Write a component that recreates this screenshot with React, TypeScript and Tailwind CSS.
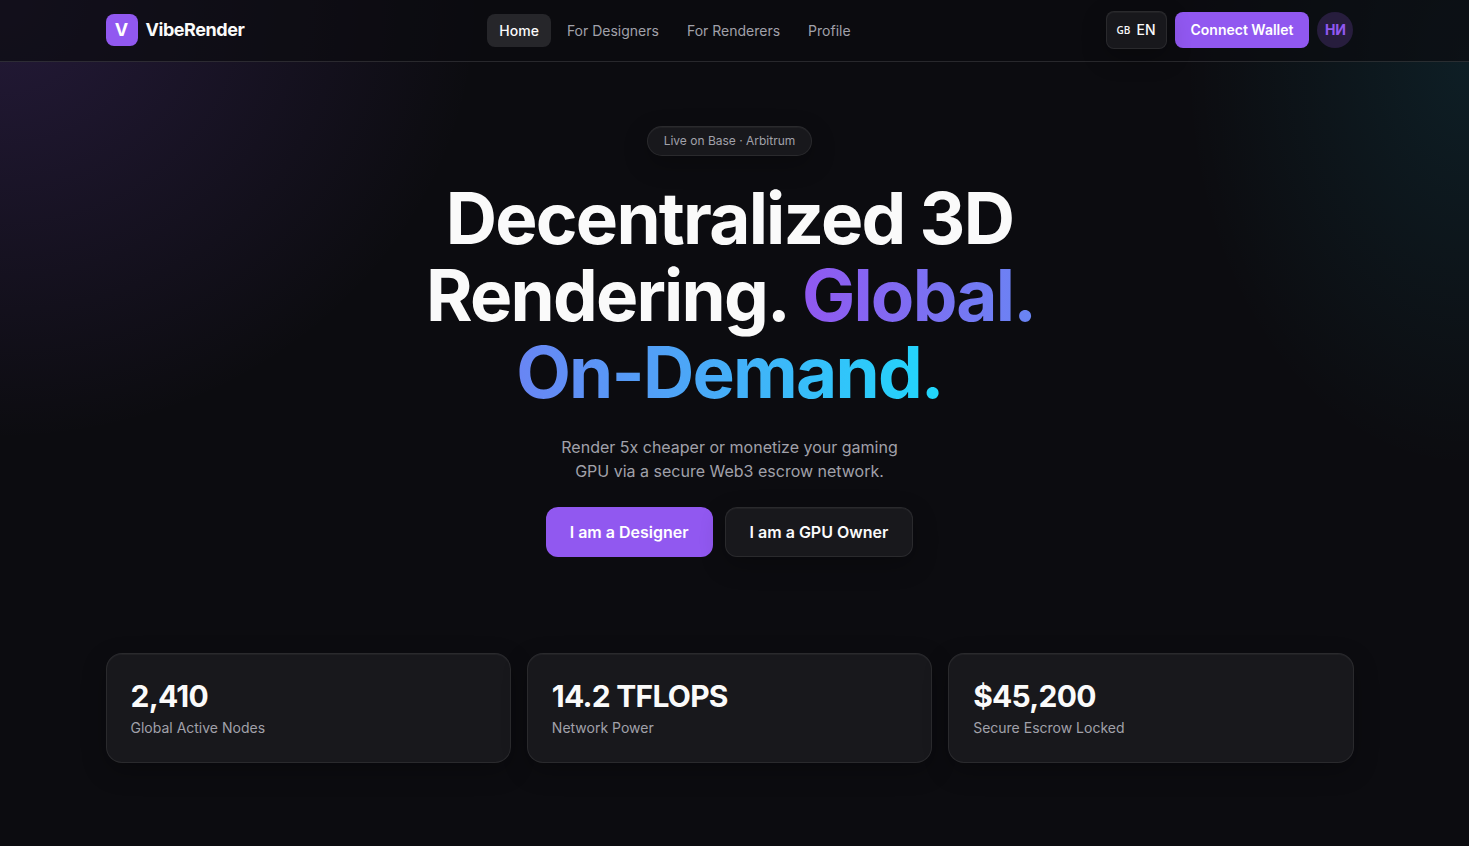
import React from "react";

const links = ["Home", "For Designers", "For Renderers", "Profile"];

const stats = [
  { value: "2,410", label: "Global Active Nodes" },
  { value: "14.2 TFLOPS", label: "Network Power" },
  { value: "$45,200", label: "Secure Escrow Locked" },
];

const glass =
  "relative border border-white/[0.08] bg-[#18181c] shadow-[inset_0_1px_0_rgba(255,255,255,0.04),0_8px_24px_rgba(0,0,0,0.25)]";

function Header() {
  return (
    <header className="border-b border-white/[0.12] bg-[#0c0c10]/70 pr-[10px]">
      <div className="mx-auto flex h-[61px] max-w-7xl items-center justify-between px-4 pb-px">
        <a href="#home" className="flex items-center gap-2">
          <span className="flex size-8 items-center justify-center rounded-lg bg-[#9158f0] text-lg font-bold text-white">
            V
          </span>
          <span className="text-lg font-bold tracking-tight">VibeRender</span>
        </a>
        <nav className="flex items-center gap-1 pt-px">
          {links.map((link, i) => (
            <a
              key={link}
              href={"#" + link.toLowerCase().replace(" ", "-")}
              className={
                "flex h-[33px] items-center rounded-lg px-3 text-sm " +
                (i === 0 ? "bg-[#26262a] font-medium text-[#fafafa]" : "text-[#a1a1aa]")
              }
            >
              {link}
            </a>
          ))}
        </nav>
        <div className="flex items-center gap-2">
          <button
            className={glass + " z-10 flex h-[38px] items-center gap-1.5 rounded-lg px-2.5 text-sm font-medium"}
          >
            <span className="font-['Open_Sans'] text-[10px] font-semibold leading-5">GB</span>
            <span>EN</span>
          </button>
          <button className="h-9 rounded-lg bg-[#9158f0] px-4 text-sm font-semibold text-white">
            Connect Wallet
          </button>
          <button className="size-9 rounded-full bg-[#271d3d] text-sm font-bold text-[#9158f0]">
            НИ
          </button>
        </div>
      </div>
    </header>
  );
}

function Hero() {
  return (
    <section className="flex flex-col items-center pt-16 pb-24 text-center">
      <p className={glass + " flex h-[30px] items-center rounded-full px-4 text-xs text-[#a1a1aa]"}>
        Live on Base · Arbitrum
      </p>
      <h1 className="mt-6 max-w-2xl text-[71px] font-bold leading-[77px] tracking-tight">
        Decentralized 3D Rendering.{" "}
        <span className="bg-linear-to-r/srgb from-[#9158f0] to-[#6985f4] bg-clip-text text-transparent">
          Global.
        </span>{" "}
        <span className="bg-linear-to-r/srgb from-[#6985f4] to-[#20d8fc] bg-clip-text text-transparent">
          On-Demand.
        </span>
      </h1>
      <p className="mt-6 max-w-[360px] text-base text-[#a1a1aa]">
        Render 5x cheaper or monetize your gaming GPU via a secure Web3 escrow network.
      </p>
      <div className="mt-6 flex gap-3">
        <button className="h-[50px] rounded-xl bg-[#9158f0] px-6 font-semibold text-white">
          I am a Designer
        </button>
        <button className={glass + " h-[50px] rounded-xl px-6 font-semibold"}>I am a GPU Owner</button>
      </div>
    </section>
  );
}

export default function App() {
  return (
    <div className="min-h-screen bg-[#0c0c10] bg-[radial-gradient(480px_440px_at_0%_0%,rgba(145,88,240,0.18),transparent),radial-gradient(285px_410px_at_100%_60px,rgba(32,216,252,0.09),transparent)] font-['Inter',sans-serif] text-[#fafafa]">
      <Header />
      <div className="pr-[10px]">
        <main className="mx-auto max-w-7xl px-4 pb-20">
          <Hero />
          <section className="grid grid-cols-3 gap-4">
            {stats.map((s) => (
              <div key={s.label} className={glass + " rounded-2xl p-6"}>
                <p className="text-3xl font-bold tracking-tight">{s.value}</p>
                <p className="mt-1 text-sm text-[#a1a1aa]">{s.label}</p>
              </div>
            ))}
          </section>
        </main>
      </div>
    </div>
  );
}
